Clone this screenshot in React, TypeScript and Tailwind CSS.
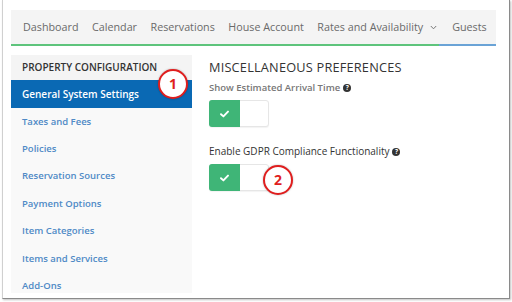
import React from "react";

const navItems = ["Dashboard", "Calendar", "Reservations", "House Account"];
const sideItems = [
  "Taxes and Fees",
  "Policies",
  "Reservation Sources",
  "Payment Options",
  "Item Categories",
  "Items and Services",
  "Add-Ons",
];

function Check() {
  return (
    <svg width="9" height="8" viewBox="0 0 9 8">
      <path d="M1 4.2 L3.4 6.4 L8 1.6" stroke="white" strokeWidth="1.9" fill="none" strokeLinecap="round" strokeLinejoin="round" />
    </svg>
  );
}

function Toggle() {
  return (
    <div className="flex h-[27px] w-[60px] rounded-[3px] border border-[#e6e6e6] bg-white shadow-[0_1px_1px_rgba(0,0,0,0.05)]">
      <div className="flex w-[31px] items-center justify-center rounded-l-[3px] bg-[#3fb577] -m-px h-[27px]">
        <Check />
      </div>
    </div>
  );
}

function Help() {
  return (
    <span className="ml-[3px] inline-flex h-[8px] w-[8px] items-center justify-center rounded-full bg-[#333] text-[6.5px] font-bold leading-none text-white">
      ?
    </span>
  );
}

function Badge({ n }: { n: string }) {
  return (
    <div className="flex h-[30px] w-[30px] items-center justify-center rounded-full border-2 border-[#e01e1e] bg-white text-[14px] font-bold leading-none text-[#e01e1e] shadow-[0_0_2px_rgba(0,0,0,0.3)]">
      {n}
    </div>
  );
}

export default function App() {
  return (
    <div className="h-[302px] w-[512px] bg-white" style={{ fontFamily: '"Open Sans", sans-serif' }}>
      <div className="ml-[2px] h-[299px] w-[508px] border-l border-b border-r border-l-[#d0d0d0] border-b-[#8a8a8a] border-r-[#8a8a8a] bg-white pl-[8px] pt-[10px] shadow-[1px_1px_2px_rgba(0,0,0,0.25)]">
        {/* Nav */}
        <div className="w-[485px]">
          <div className="flex h-[34px] items-center bg-[#f4f4f4] pl-[12px] text-[10.75px] text-[#6a6a6a]">
            {navItems.map((t) => (
              <span key={t} className="mr-[13.5px]">{t}</span>
            ))}
            <span className="flex items-center">
              Rates and Availability
              <svg className="ml-[7px]" width="7" height="5" viewBox="0 0 7 5">
                <path d="M0.8 1 L3.5 3.8 L6.2 1" stroke="#777" strokeWidth="1" fill="none" />
              </svg>
            </span>
            <span className="ml-[15px]">Guests</span>
          </div>
          <div className="flex h-[2px]">
            <div className="w-[428px] bg-[#5ec47c]" />
            <div className="flex-1 bg-[#6aa3d6]" />
          </div>
        </div>

        {/* Main */}
        <div className="mt-[9px] flex">
          <div className="relative w-[181px]">
            <div className="flex h-[25px] items-center bg-[#f4f4f4] pl-[11px] text-[10px] font-semibold text-[#333]">
              PROPERTY CONFIGURATION
            </div>
            <div className="flex h-[28px] items-center bg-[#0a69b4] pl-[11px] text-[10px] font-semibold text-white">
              General System Settings
            </div>
            <div className="h-[185px] bg-[#f9f9f9]">
              {sideItems.map((t) => (
                <div key={t} className="flex h-[27.4px] items-center pl-[11px] text-[9.5px] font-semibold text-[#4f8ac6]">
                  {t}
                </div>
              ))}
            </div>
            <div className="absolute left-[147px] top-[14px]">
              <Badge n="1" />
            </div>
          </div>

          <div className="relative flex-1 pl-[17px] pt-[3px]">
            <div className="text-[12.75px] leading-[18px] tracking-[0.2px] text-[#333]">MISCELLANEOUS PREFERENCES</div>
            <div className="mt-[5px] flex items-center text-[9.5px] font-semibold text-[#777]">
              Show Estimated Arrival Time
              <Help />
            </div>
            <div className="mt-[5px]">
              <Toggle />
            </div>
            <div className="mt-[17px] flex items-center text-[10px] text-[#333]">
              Enable GDPR Compliance Functionality
              <Help />
            </div>
            <div className="mt-[5px]">
              <Toggle />
            </div>
            <div className="absolute left-[71px] top-[110px]">
              <Badge n="2" />
            </div>
          </div>
        </div>
      </div>
    </div>
  );
}
